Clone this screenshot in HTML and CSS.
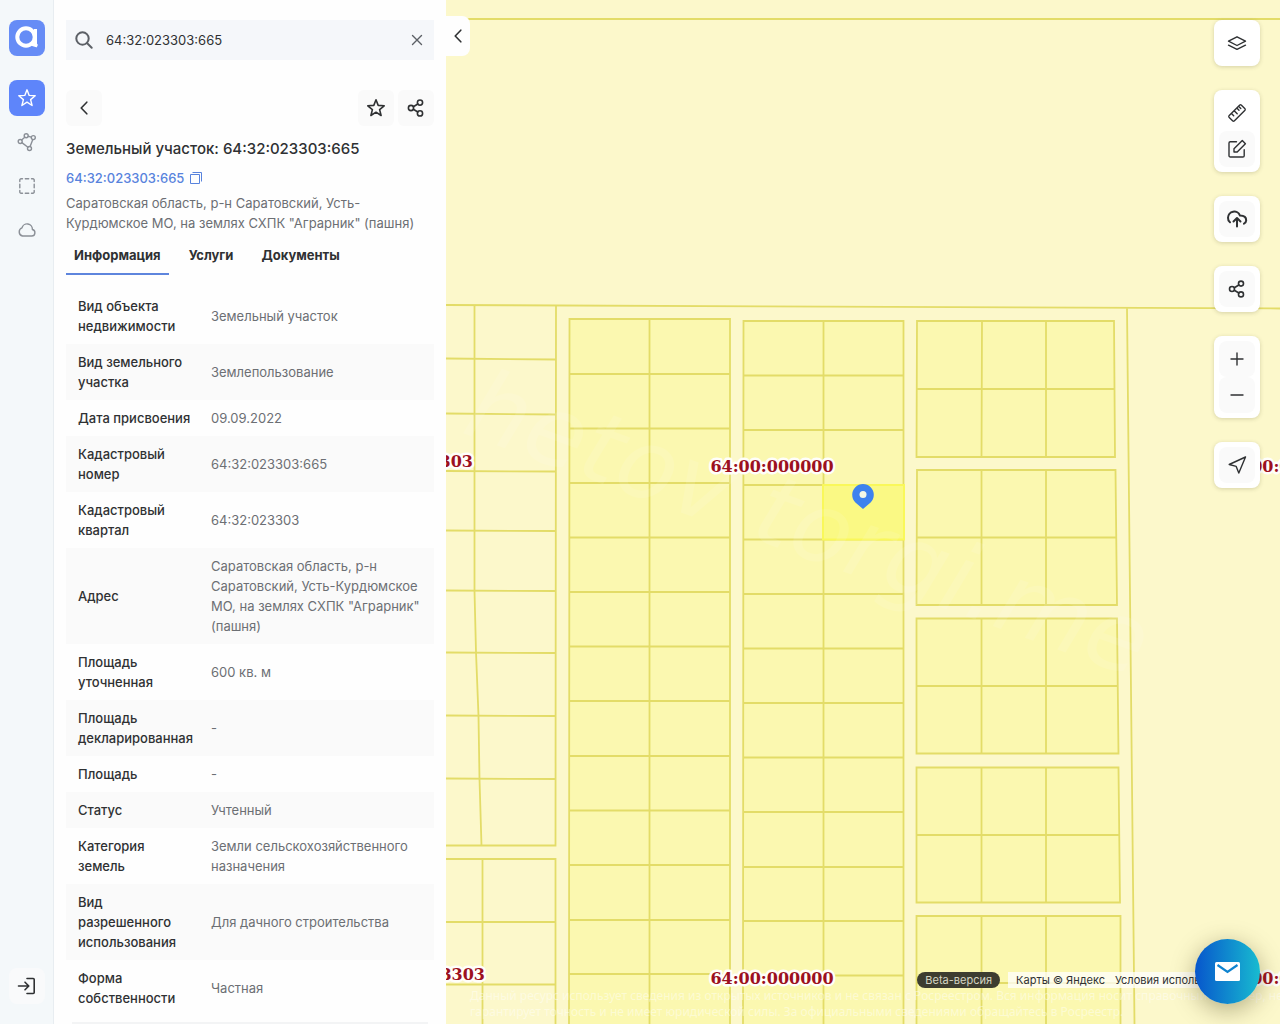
FILE: index.html
```html
<!DOCTYPE html>
<html lang="ru">
<head>
<meta charset="utf-8">
<meta name="viewport" content="width=device-width, initial-scale=1">
<title>Земельный участок: 64:32:023303:665</title>
<link rel="stylesheet" href="styles.css">
</head>
<body>
<div class="app">
  <nav class="rail" aria-label="Разделы">
    <a class="rail-item logo" href="#" aria-label="Главная">
      <svg width="36" height="36" viewBox="0 0 36 36" fill="none" stroke="#fff"><circle cx="17" cy="17" r="8.700" stroke-width="4"/><path d="M26.500 9v15l1.300 2" stroke-width="3"/><path d="M26 17v7l1.500 2.500-5-1.500" fill="#fff" stroke-width="1.500" stroke-linejoin="round"/></svg>
    </a>
    <a class="rail-item active" href="#" aria-label="Избранное">
      <svg width="20" height="20" viewBox="0 0 20 20" class="ic"><path d="M10 1.800l2.200 5.600 6 .4-4.600 3.800 1.500 5.900-5.100-3.300-5.100 3.300 1.500-5.900L1.800 7.800l6-.4z"/></svg>
    </a>
    <a class="rail-item" href="#" aria-label="Объекты">
      <svg width="20" height="20" viewBox="0 0 20 20" class="ic"><circle cx="9.200" cy="3.800" r="2"/><circle cx="16.300" cy="5.600" r="2"/><circle cx="3.200" cy="9.500" r="2"/><circle cx="12.500" cy="16.500" r="2"/><path d="M7.800 5.300L4.600 8M11.200 4.300l3.100.8M15.800 7.600l-2.700 6.900M4.900 10.600l6 4.700"/></svg>
    </a>
    <a class="rail-item" href="#" aria-label="Выделение области">
      <svg width="20" height="20" viewBox="0 0 20 20" class="ic"><path d="M2.800 5.500V4a1.200 1.200 0 0 1 1.200-1.200h1.500M14.500 2.800H16A1.200 1.200 0 0 1 17.200 4v1.500M17.200 14.500V16a1.200 1.200 0 0 1-1.200 1.200h-1.500M5.500 17.200H4A1.200 1.200 0 0 1 2.800 16v-1.500M8.300 2.800h3.400M8.300 17.200h3.400M2.800 8.300v3.400M17.200 8.300v3.400"/></svg>
    </a>
    <a class="rail-item" href="#" aria-label="Облако">
      <svg width="20" height="20" viewBox="0 0 20 20" class="ic"><path d="M5.500 16h9.200a3.300 3.300 0 0 0 .7-6.500A5.300 5.300 0 0 0 5 7.800 4.300 4.300 0 0 0 5.500 16z"/></svg>
    </a>
    <a class="rail-item login" href="#" aria-label="Войти">
      <svg width="20" height="20" viewBox="0 0 20 20" class="ic bold"><path d="M10 2.500h6.200a1 1 0 0 1 1 1v13a1 1 0 0 1-1 1H10M1.500 10h10M8 6.200l3.800 3.800L8 13.800"/></svg>
    </a>
  </nav>

  <aside class="panel">
    <form class="search">
      <label for="q" aria-label="Поиск"><svg width="20" height="20" viewBox="0 0 20 20" class="ic heavy"><circle cx="8.500" cy="8.500" r="6.200"/><path d="M13.200 13.200l4.500 4.500"/></svg></label>
      <input id="q" type="text" value="64:32:023303:665">
      <button type="button" aria-label="Очистить"><svg width="18" height="20" viewBox="1 0 18 20" class="ic"><path d="M5.500 5.500l9 9M14.500 5.500l-9 9"/></svg></button>
    </form>

    <div class="actions">
      <button class="square" type="button" aria-label="Назад"><svg width="20" height="20" viewBox="0 0 20 20" class="ic bold"><path d="M12.800 4.200L7.200 10l5.600 5.800"/></svg></button>
      <span class="spacer"></span>
      <button class="square" type="button" aria-label="В избранное"><svg width="20" height="20" viewBox="0 0 20 20" class="ic bold"><path d="M10 1.800l2.200 5.600 6 .4-4.600 3.800 1.500 5.900-5.100-3.300-5.100 3.300 1.500-5.900L1.800 7.800l6-.4z"/></svg></button>
      <button class="square" type="button" aria-label="Поделиться"><svg width="20" height="20" viewBox="0 0 20 20" class="ic bold"><circle cx="5" cy="10" r="2.600"/><circle cx="14" cy="4.600" r="2.600"/><circle cx="14" cy="15.400" r="2.600"/><path d="M7.300 8.700l4.500-2.700M7.300 11.300l4.500 2.700"/></svg></button>
    </div>

    <h1>Земельный участок: 64:32:023303:665</h1>
    <div class="number">
      <a href="#">64:32:023303:665</a>
      <button type="button" aria-label="Скопировать"><svg width="14" height="14" viewBox="0 0 14 14" fill="none" stroke="currentColor"><path d="M1.500 3.500h9v9h-9zM3.500 1.500h9v9"/></svg></button>
    </div>
    <p class="address">Саратовская область, р-н Саратовский, Усть-Курдюмское МО, на землях СХПК "Аграрник" (пашня)</p>

    <div class="tabs" role="tablist">
      <button class="tab selected" type="button" role="tab" aria-selected="true">Информация</button>
      <button class="tab" type="button" role="tab">Услуги</button>
      <button class="tab" type="button" role="tab">Документы</button>
    </div>

    <table class="info">
      <tbody>
        <tr><th scope="row">Вид объекта недвижимости</th><td>Земельный участок</td></tr>
        <tr><th scope="row">Вид земельного участка</th><td>Землепользование</td></tr>
        <tr><th scope="row">Дата присвоения</th><td>09.09.2022</td></tr>
        <tr><th scope="row">Кадастровый номер</th><td>64:32:023303:665</td></tr>
        <tr><th scope="row">Кадастровый квартал</th><td>64:32:023303</td></tr>
        <tr><th scope="row">Адрес</th><td>Саратовская область, р-н Саратовский, Усть-Курдюмское МО, на землях СХПК "Аграрник" (пашня)</td></tr>
        <tr><th scope="row">Площадь уточненная</th><td>600 кв. м</td></tr>
        <tr><th scope="row">Площадь декларированная</th><td>-</td></tr>
        <tr><th scope="row">Площадь</th><td>-</td></tr>
        <tr><th scope="row">Статус</th><td>Учтенный</td></tr>
        <tr><th scope="row">Категория земель</th><td>Земли сельскохозяйственного назначения</td></tr>
        <tr><th scope="row">Вид разрешенного использования</th><td>Для дачного строительства</td></tr>
        <tr><th scope="row">Форма собственности</th><td>Частная</td></tr>
      </tbody>
    </table>
    <div class="next-card"></div>
  </aside>

  <main class="map">
    <svg class="plan" viewBox="446 0 834 1024" preserveAspectRatio="xMidYMid slice">
      <g class="parcel">
        <path d="M569.500 319H730V1030H569z"/>
        <path d="M743.500 321H903.500V1030H743z"/>
        <path d="M917 321H1114l1 136H916.500z"/>
        <path d="M917 470H1115.500l1.500 135H916.500z"/>
        <path d="M916.500 618.500H1117l1.500 135H916.500z"/>
        <path d="M916.500 767.500H1118.500l1.500 135H916.500z"/>
        <path d="M916.500 916H1120.500V1030H916.500z"/>
      </g>
      <g class="edge">
        <path d="M446 19H1280M446 305L1280 308.500M1127 308L1134.500 1024"/>
        <path d="M474.500 305V591L476 652 478.500 716 479.500 779 481.500 846M556 305.500L555.500 845.500H446"/>
        <path d="M446 358.500L556 359.500M446 413.500L556 414.500M446 471L556 471.500M446 530.500L556 531M446 590.500L556 591M446 652.500L556 653M446 715.500L556 716M446 778.500L556 779"/>
        <path d="M446 859H555.500V1024M482.500 859V1024M446 922H555.500M446 984.500H555.500"/>
        <path d="M649.500 319V1024M569 374H730M569 428.500H730M569 483H730M569 537.500H730M569 592H730M569 646.500H730M569 701H730M569 756H730M569 810.500H730M569 865H730M569 920H730M569 974H730"/>
        <path d="M823.500 321V1024M743 375.500H903M743 430H903M743 485H903M743 539.500H903M743 594H903M743 648.500H903M743 703H903M743 757.500H903M743 812H903M743 867H903M743 921H903M743 975.500H903"/>
        <path d="M982 321L981.500 457M1046 321V457M917 389H1114.500M981.500 470V605M1046 470V605M917 537.500H1116M981.500 618V753M1046 618V753M917 686H1118M981.500 767V902M1046 767V902M917 835H1119M981.500 916V1024M1046 916V1024M917 983H1120"/>
      </g>
      <path class="chosen" d="M823 485H904V539.500H823z"/>
      <text class="watermark" transform="translate(460 432) rotate(20)">hetov torgi.me</text>
      <path class="pin" d="M863 509l-7.600-6.500a10.800 10.800 0 1 1 15.200 0z"/>
      <circle class="pin-hole" cx="863" cy="494.600" r="3.500"/>
      <g class="quarter">
        <text x="473" y="467" text-anchor="end">64:32:023303</text>
        <text x="772" y="472" text-anchor="middle">64:00:000000</text>
        <text x="1223" y="472">64:00:000000</text>
        <text x="485" y="980" text-anchor="end">64:32:023303</text>
        <text x="772" y="984" text-anchor="middle">64:00:000000</text>
        <text x="1223" y="984">64:00:000000</text>
      </g>
    </svg>

    <button class="collapse" type="button" aria-label="Свернуть панель"><svg width="20" height="20" viewBox="0 0 20 20" class="ic bold"><path d="M12.800 4.200L7.200 10l5.600 5.800"/></svg></button>

    <div class="tools">
      <div class="tool-card"><button class="plain" type="button" aria-label="Слои"><svg width="20" height="20" viewBox="0 0 20 20" class="ic"><path d="M1.500 8.200L10 3.800l8.500 4.400-8.500 4.300zM1.500 12.200L10 16.400l8.500-4.200"/></svg></button></div>
      <div class="tool-card">
        <button class="plain" type="button" aria-label="Линейка"><svg width="20" height="20" viewBox="0 0 20 20" class="ic"><path d="M2 12.800L12.800 2q.7-.5 1.400 0L18 5.800q.5.7 0 1.400L7.200 18q-.7.500-1.400 0L2 14.200q-.5-.7 0-1.400zM4.500 10.500l2.200 2.200M7.200 7.800l3 3M9.800 5l2.200 2.200M12.300 4l1.500 1.500"/></svg></button>
        <button type="button" aria-label="Рисовать"><svg width="20" height="20" viewBox="0 0 20 20" class="ic"><path d="M9.500 2.800H3.300A1.300 1.300 0 0 0 2 4.100v12.600A1.300 1.300 0 0 0 3.300 18h12.600a1.300 1.300 0 0 0 1.300-1.300v-6M7 13V9.800l8.300-8.200 3.100 3.200L10.200 13z"/></svg></button>
      </div>
      <div class="tool-card"><button type="button" aria-label="Загрузить"><svg width="22" height="20" viewBox="0 0 22 20" class="ic heavy"><path d="M4 13.300A5.400 5.400 0 0 1 2 8.800 6.200 6.200 0 0 1 14 6.600q6.300.2 6.200 4.800a4 4 0 0 1-2.200 3.300M11 17.500V10M7.500 12.500L11 9l3.500 3.500"/></svg></button></div>
      <div class="tool-card"><button type="button" aria-label="Поделиться картой"><svg width="20" height="20" viewBox="0 0 20 20" class="ic bold"><circle cx="5" cy="10" r="2.500"/><circle cx="14" cy="4.600" r="2.500"/><circle cx="14" cy="15.400" r="2.500"/><path d="M7.300 8.700l4.500-2.700M7.300 11.300l4.500 2.700"/></svg></button></div>
      <div class="tool-card">
        <button type="button" aria-label="Приблизить"><svg width="20" height="20" viewBox="0 0 20 20" class="ic"><path d="M4 10h12M10 4v12"/></svg></button>
        <button type="button" aria-label="Отдалить"><svg width="20" height="20" viewBox="0 0 20 20" class="ic"><path d="M4 10h12"/></svg></button>
      </div>
      <div class="tool-card"><button type="button" aria-label="Моё местоположение"><svg width="20" height="20" viewBox="0 0 20 20" class="ic"><path d="M18.500 2L2.200 9.500l7 1.900 2.600 6.700z"/></svg></button></div>
    </div>

    <div class="attribution">
      <span class="beta">Beta-версия</span>
      <span class="copyright"><a href="#">Карты © Яндекс</a><a href="#">Условия использования</a></span>
    </div>
    <p class="disclaimer">Данный ресурс использует сведения из открытых источников и не связан с Росреестром. Вся информация носит справочный характер, не<br>гарантирует точность и не имеет юридической силы. За официальными сведениями обращайтесь в Росреестр.</p>
    <button class="chat" type="button" aria-label="Написать нам"><svg width="26" height="20" viewBox="0 0 26 20"><rect width="25" height="19" rx="1.500" fill="#fff"/><path d="M2.500 3l10 7 10-7" fill="none" stroke="#0f84d0" stroke-width="2.200"/></svg></button>
  </main>
</div>
</body>
</html>
```
FILE: styles.css
```css
* { box-sizing: border-box; }

body {
  margin: 0;
  font: 13px/20px Inter, "Liberation Sans", sans-serif;
  color: #2f3133;
}

button, input { font: inherit; color: inherit; border: 0; background: none; padding: 0; }
button { cursor: pointer; display: flex; align-items: center; justify-content: center; }
a { color: inherit; text-decoration: none; }
svg { display: block; flex: none; }

.ic { fill: none; stroke: currentColor; stroke-width: 1.4; stroke-linecap: round; stroke-linejoin: round; }
.bold { stroke-width: 1.6; }
.heavy { stroke-width: 2; }

.app { display: flex; height: 100vh; overflow: hidden; }

.rail {
  flex: none;
  width: 54px;
  padding: 20px 9px;
  display: flex;
  flex-direction: column;
  gap: 8px;
  background: #f4f8fa;
  border-right: 1px solid #e8edf1;
  color: #8b9097;
}
.rail-item {
  width: 36px;
  height: 36px;
  border-radius: 8px;
  display: flex;
  align-items: center;
  justify-content: center;
}
.logo { background: #668cf6; margin-bottom: 16px; }
.active { background: #5e85fa; color: #fff; }
.login { margin-top: auto; background: #f9fafb; color: #2f3133; }

.panel {
  flex: none;
  width: 392px;
  padding: 20px 12px 0;
  background: #fefefe;
  overflow: hidden;
}

.search {
  display: flex;
  align-items: center;
  height: 40px;
  padding: 0 8px;
  background: #f5f7fa;
  color: #5c6066;
}
.search input { flex: 1; min-width: 0; margin-left: 12px; color: #2f3133; outline: 0; }

.actions { display: flex; gap: 4px; margin-top: 30px; }
.square { width: 36px; height: 36px; border-radius: 6px; background: #fafafa; }
.spacer { flex: 1; }

h1 { margin: 12px 0 0; font-size: 15px; line-height: 22px; font-weight: 500; }

.number { display: flex; gap: 5px; align-items: center; margin-top: 8px; color: #5883dd; font-weight: 500; }
.address { margin: 5px 0 0; color: #6c6f74; }

.tabs { display: flex; gap: 12px; margin-top: 4px; }
.tab { padding: 8px; font-weight: 700; line-height: 20px; border-bottom: 2px solid transparent; }
.selected { border-color: #5e85dd; }

.info { width: 100%; margin-top: 13px; border-collapse: collapse; table-layout: fixed; }
.info th, .info td { padding: 8px 12px; text-align: left; vertical-align: middle; }
.info th { width: 133px; padding-right: 5px; font-weight: 500; }
.info td { color: #6c6f74; }
.info tr:nth-child(even) { background: #fafafa; }

.next-card { height: 60px; margin: 6px 6px 0; background: #f3f4f5; }

.map { position: relative; flex: 1; min-width: 0; overflow: hidden; background: #fcf8cb; }
.plan { width: 100%; height: 100%; }
.parcel { fill: #fbf8b0; stroke: #e3dc68; stroke-width: 1.8; }
.edge { fill: none; stroke: #e3dc68; stroke-width: 1.8; }
.chosen { fill: #faf984; stroke: #f9f85a; stroke-width: 2; }
.pin { fill: #3d82ee; }
.pin-hole { fill: #f4f8e6; }
.watermark { font: italic 97px "DejaVu Sans", sans-serif; fill: #fff; opacity: 0.1; }
.quarter {
  font: bold 16px "DejaVu Serif", serif;
  fill: #9c1020;
  stroke: #fffefa;
  stroke-width: 5;
  stroke-linejoin: round;
  paint-order: stroke;
}

.collapse {
  position: absolute;
  left: 0;
  top: 16px;
  width: 24px;
  height: 40px;
  border-radius: 0 8px 8px 0;
  background: #fefefe;
}

.tools { position: absolute; top: 20px; right: 20px; display: flex; flex-direction: column; gap: 24px; }
.tool-card { padding: 5px; border-radius: 8px; background: #fff; box-shadow: 0 1px 4px rgba(60, 60, 20, 0.2); }
.tool-card button { width: 36px; height: 36px; border-radius: 8px; background: #fafafa; }
.tool-card .plain { background: none; }

.attribution {
  position: absolute;
  right: 28px;
  bottom: 36px;
  display: flex;
  gap: 8px;
  font-size: 11px;
  line-height: 16px;
}
.beta { padding: 0 8px; border-radius: 8px; background: #3d3d30; color: #d5d5c4; }
.copyright { display: flex; gap: 10px; padding: 0 8px; background: rgba(255, 255, 255, 0.75); }

.disclaimer {
  position: absolute;
  left: 24px;
  bottom: 4px;
  margin: 0;
  font: 12px/16px "Noto Sans", sans-serif;
  white-space: nowrap;
  color: rgba(255, 255, 255, 0.45);
}

.chat {
  position: absolute;
  right: 20px;
  bottom: 20px;
  width: 65px;
  height: 65px;
  border-radius: 50%;
  background: linear-gradient(90deg, #0756cc, #18bbd0);
  box-shadow: 0 6px 24px rgba(70, 60, 20, 0.4);
}
```
